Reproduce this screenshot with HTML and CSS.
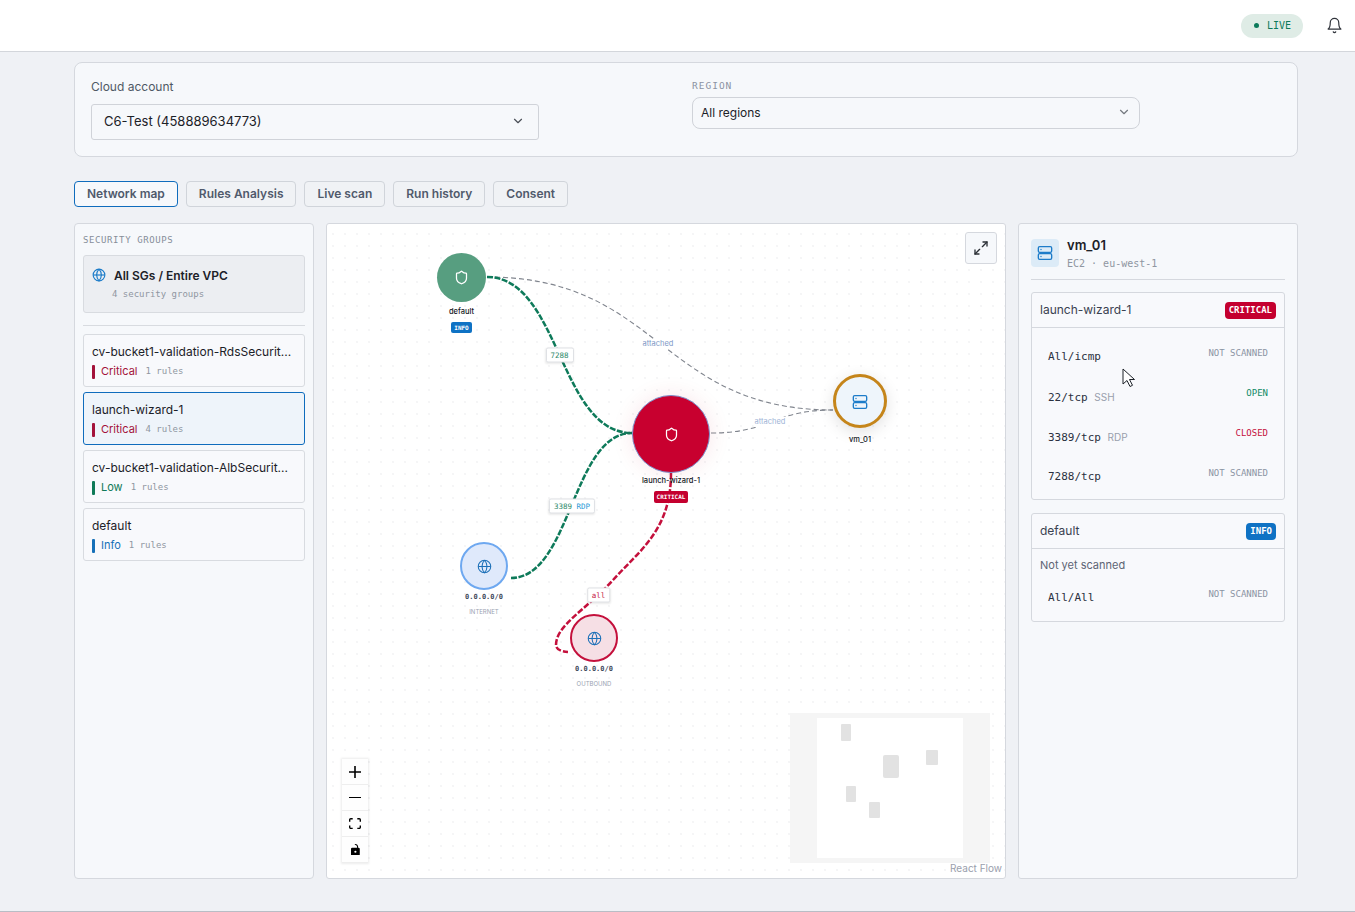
FILE: index.html
```html
<!DOCTYPE html>
<html lang="en">
<head>
    <meta charset="UTF-8">
    <meta name="viewport" content="width=device-width, initial-scale=1.0">
    <title>Network map</title>
    <link rel="stylesheet" href="styles.css">
</head>
<body>
    <header class="topbar">
        <div class="live-pill"><span class="live-dot"></span>LIVE</div>
        <svg class="bell" viewBox="0 0 24 24"><path d="M6 8a6 6 0 0 1 12 0c0 7 3 9 3 9H3s3-2 3-9"/><path d="M10.3 21a1.94 1.94 0 0 0 3.4 0"/></svg>
    </header>

    <main class="page">
        <section class="filters">
            <div class="field">
                <label class="field-label">Cloud account</label>
                <div class="select select-large">
                    <span>C6-Test (458889634773)</span>
                    <svg class="chevron" viewBox="0 0 24 24"><path d="m6 9 6 6 6-6"/></svg>
                </div>
            </div>
            <div class="field">
                <label class="field-label-mono">REGION</label>
                <div class="select select-small">
                    <span>All regions</span>
                    <svg class="chevron chevron-light" viewBox="0 0 24 24"><path d="m6 9 6 6 6-6"/></svg>
                </div>
            </div>
        </section>

        <nav class="tabs">
            <button class="tab tab-active">Network map</button>
            <button class="tab">Rules Analysis</button>
            <button class="tab">Live scan</button>
            <button class="tab">Run history</button>
            <button class="tab">Consent</button>
        </nav>

        <div class="columns">
            <aside class="sg-panel">
                <div class="mono-heading">SECURITY GROUPS</div>
                <div class="all-card">
                    <div class="all-title">
                        <svg class="globe" viewBox="0 0 24 24"><circle cx="12" cy="12" r="10"/><path d="M12 2a14.5 14.5 0 0 0 0 20 14.5 14.5 0 0 0 0-20"/><path d="M2 12h20"/></svg>
                        All SGs / Entire VPC
                    </div>
                    <div class="all-sub">4 security groups</div>
                </div>
                <div class="divider"></div>
                <ul class="sg-list">
                    <li class="sg-item">
                        <div class="sg-name">cv-bucket1-validation-RdsSecurit...</div>
                        <div class="sg-meta sev-critical"><span class="sev-bar"></span>Critical<span class="sg-rules">1 rules</span></div>
                    </li>
                    <li class="sg-item sg-selected">
                        <div class="sg-name">launch-wizard-1</div>
                        <div class="sg-meta sev-critical"><span class="sev-bar"></span>Critical<span class="sg-rules">4 rules</span></div>
                    </li>
                    <li class="sg-item">
                        <div class="sg-name">cv-bucket1-validation-AlbSecurit...</div>
                        <div class="sg-meta sev-low"><span class="sev-bar"></span>Low<span class="sg-rules">1 rules</span></div>
                    </li>
                    <li class="sg-item">
                        <div class="sg-name">default</div>
                        <div class="sg-meta sev-info"><span class="sev-bar"></span>Info<span class="sg-rules">1 rules</span></div>
                    </li>
                </ul>
            </aside>

            <section class="canvas">
                <svg class="edges" viewBox="327 224 678 654">
                    <path class="edge-attached" d="M487 277C660 277 660 410 833 410"/>
                    <path class="edge-attached" d="M711 433C772 433 772 410 833 410"/>
                    <path class="edge-green" d="M487 277C560 277 559 433 632 433"/>
                    <path class="edge-green" d="M511 578C571 578 572 433 632 433"/>
                    <path class="edge-red" d="M671 473C671 530 640 550 613 580S556 625 556 645Q556 651 568 652"/>
                </svg>

                <div class="edge-label edge-label-7288 text-green">7288</div>
                <div class="edge-label edge-label-rdp"><span class="text-green">3389</span> <span class="text-blue">RDP</span></div>
                <div class="edge-label edge-label-all text-red">all</div>
                <div class="edge-text edge-text-one">attached</div>
                <div class="edge-text edge-text-two">attached</div>

                <div class="node node-default">
                    <div class="circle">
                        <svg class="shield" viewBox="0 0 24 24"><path d="M20 13c0 5-3.5 7.5-7.66 8.95a1 1 0 0 1-.67-.01C7.5 20.5 4 18 4 13V6a1 1 0 0 1 1-1c2 0 4.5-1.2 6.24-2.72a1.17 1.17 0 0 1 1.52 0C14.51 3.81 17 5 19 5a1 1 0 0 1 1 1z"/></svg>
                    </div>
                    <div class="node-label">default</div>
                    <div class="node-badge badge-info">INFO</div>
                </div>

                <div class="node node-launch">
                    <div class="circle">
                        <svg class="shield" viewBox="0 0 24 24"><path d="M20 13c0 5-3.5 7.5-7.66 8.95a1 1 0 0 1-.67-.01C7.5 20.5 4 18 4 13V6a1 1 0 0 1 1-1c2 0 4.5-1.2 6.24-2.72a1.17 1.17 0 0 1 1.52 0C14.51 3.81 17 5 19 5a1 1 0 0 1 1 1z"/></svg>
                    </div>
                    <div class="node-label">launch-wizard-1</div>
                    <div class="node-badge badge-critical">CRITICAL</div>
                </div>

                <div class="node node-vm">
                    <div class="circle">
                        <svg class="server" viewBox="0 0 24 24"><rect x="2" y="2.5" width="20" height="8.5" rx="2"/><rect x="2" y="13" width="20" height="8.5" rx="2"/><path d="M6 6.7h.01"/><path d="M6 17.2h.01"/></svg>
                    </div>
                    <div class="node-label">vm_01</div>
                </div>

                <div class="node node-internet">
                    <div class="circle">
                        <svg class="globe-node" viewBox="0 0 24 24"><circle cx="12" cy="12" r="10"/><path d="M12 2a14.5 14.5 0 0 0 0 20 14.5 14.5 0 0 0 0-20"/><path d="M2 12h20"/></svg>
                    </div>
                    <div class="node-ip">0.0.0.0/0</div>
                    <div class="node-type">INTERNET</div>
                </div>

                <div class="node node-outbound">
                    <div class="circle">
                        <svg class="globe-node" viewBox="0 0 24 24"><circle cx="12" cy="12" r="10"/><path d="M12 2a14.5 14.5 0 0 0 0 20 14.5 14.5 0 0 0 0-20"/><path d="M2 12h20"/></svg>
                    </div>
                    <div class="node-ip">0.0.0.0/0</div>
                    <div class="node-type">OUTBOUND</div>
                </div>

                <button class="expand-button">
                    <svg viewBox="0 0 24 24"><path d="M15 3h6v6"/><path d="m21 3-7 7"/><path d="m3 21 7-7"/><path d="M9 21H3v-6"/></svg>
                </button>

                <div class="controls">
                    <button class="control"><svg class="icon-plus" viewBox="0 0 32 32"><path d="M32 18.133H18.133V32h-4.266V18.133H0v-4.266h13.867V0h4.266v13.867H32z"/></svg></button>
                    <button class="control"><svg class="icon-minus" viewBox="0 0 32 5"><path d="M0 0h32v4.2H0z"/></svg></button>
                    <button class="control"><svg class="icon-fit" viewBox="0 0 32 30"><path d="M3.692 4.63c0-.53.4-.938.939-.938h5.215V0H4.708C2.13 0 0 2.054 0 4.63v5.216h3.692V4.631zM27.354 0h-5.2v3.692h5.17c.53 0 .984.4.984.939v5.215H32V4.631A4.624 4.624 0 0027.354 0zm.954 24.83c0 .532-.4.94-.939.94h-5.215v3.768h5.215c2.577 0 4.631-2.13 4.631-4.707v-5.139h-3.692v5.139zm-23.677.94c-.531 0-.939-.4-.939-.94v-5.138H0v5.139c0 2.577 2.13 4.707 4.708 4.707h5.138V25.77H4.631z"/></svg></button>
                    <button class="control"><svg class="icon-lock" viewBox="0 0 25 32"><path d="M21.333 10.667H19.81V7.619C19.81 3.429 16.38 0 12.19 0c-4.114 1.828-1.37 2.133.305 2.438 1.676.305 4.42 2.59 4.42 5.181v3.048H3.047A3.056 3.056 0 000 13.714v15.238A3.056 3.056 0 003.048 32h18.285a3.056 3.056 0 003.048-3.048V13.714a3.056 3.056 0 00-3.048-3.047zM12.19 24.533a3.056 3.056 0 01-3.047-3.047 3.056 3.056 0 013.047-3.048 3.056 3.056 0 013.048 3.048 3.056 3.056 0 01-3.048 3.047z"/></svg></button>
                </div>

                <svg class="minimap" viewBox="790 713 200 150">
                    <rect class="minimap-mask" x="790" y="713" width="200" height="150"/>
                    <rect class="minimap-view" x="817" y="718" width="146" height="140"/>
                    <rect class="minimap-node" x="841" y="724" width="10" height="17" rx="1"/>
                    <rect class="minimap-node" x="883" y="755" width="16" height="23" rx="2"/>
                    <rect class="minimap-node" x="926" y="750" width="12" height="15" rx="1"/>
                    <rect class="minimap-node" x="846" y="786" width="10" height="16" rx="1"/>
                    <rect class="minimap-node" x="869" y="802" width="11" height="16" rx="1"/>
                </svg>

                <div class="attribution">React Flow</div>
            </section>

            <aside class="detail-panel">
                <div class="detail-head">
                    <div class="detail-icon">
                        <svg class="server" viewBox="0 0 24 24"><rect x="2" y="2.5" width="20" height="8.5" rx="2"/><rect x="2" y="13" width="20" height="8.5" rx="2"/><path d="M6 6.7h.01"/><path d="M6 17.2h.01"/></svg>
                    </div>
                    <div>
                        <div class="detail-name">vm_01</div>
                        <div class="detail-sub">EC2 · eu-west-1</div>
                    </div>
                </div>

                <div class="rule-card">
                    <div class="rule-head">
                        <span class="rule-title">launch-wizard-1</span>
                        <span class="badge badge-critical">CRITICAL</span>
                    </div>
                    <div class="rule-rows">
                        <div class="rule-row"><div class="port">All/icmp</div><div class="status status-none">NOT SCANNED</div></div>
                        <div class="rule-row"><div class="port">22/tcp <span class="service">SSH</span></div><div class="status status-open">OPEN</div></div>
                        <div class="rule-row"><div class="port">3389/tcp <span class="service">RDP</span></div><div class="status status-closed">CLOSED</div></div>
                        <div class="rule-row"><div class="port">7288/tcp</div><div class="status status-none">NOT SCANNED</div></div>
                    </div>
                </div>

                <div class="rule-card">
                    <div class="rule-head">
                        <span class="rule-title">default</span>
                        <span class="badge badge-info">INFO</span>
                    </div>
                    <div class="rule-note">Not yet scanned</div>
                    <div class="rule-rows rule-rows-noted">
                        <div class="rule-row"><div class="port">All/All</div><div class="status status-none">NOT SCANNED</div></div>
                    </div>
                </div>
            </aside>
        </div>
    </main>

    <svg class="cursor" viewBox="0 0 14 20"><path d="M1 1v15l4-3.5 3 6 2.5-1.2-3-5.8h5z"/></svg>
</body>
</html>
```

FILE: styles.css
```css
* {
    box-sizing: border-box;
}
body {
    margin: 0;
    height: 912px;
    display: flex;
    flex-direction: column;
    overflow: hidden;
    font-family: Inter, "Liberation Sans", sans-serif;
    background-color: #eff1f5;
    color: #1c2128;
}
button {
    font-family: inherit;
}

/* Top bar */
.topbar {
    height: 52px;
    flex-shrink: 0;
    display: flex;
    justify-content: flex-end;
    align-items: center;
    padding: 0 12px 0 0;
    background-color: #fff;
    border-bottom: 1px solid #d3d6db;
}
.live-pill {
    width: 62px;
    height: 24px;
    display: flex;
    align-items: center;
    gap: 8px;
    padding-left: 13px;
    border-radius: 12px;
    background-color: #dfece6;
    color: #0c7a5a;
    font-family: "DejaVu Sans Mono", monospace;
    font-size: 10px;
}
.live-dot {
    width: 5px;
    height: 5px;
    border-radius: 50%;
    background-color: #0c7a5a;
}
.bell {
    width: 17px;
    height: 17px;
    margin-left: 23px;
    fill: none;
    stroke: #30343b;
    stroke-width: 1.7;
    stroke-linecap: round;
    stroke-linejoin: round;
}

/* Page */
.page {
    flex: 1;
    padding: 10px 57px 0 74px;
    border-bottom: 1px solid #b9bdc5;
}
.filters {
    height: 95px;
    display: flex;
    gap: 153px;
    padding: 16px;
    background-color: #f6f8fb;
    border: 1px solid #d5d8de;
    border-radius: 8px;
}
.field {
    width: 448px;
}
.field-label {
    display: block;
    height: 16px;
    margin-bottom: 9px;
    font-size: 12px;
    line-height: 16px;
    color: #4f5865;
}
.field-label-mono {
    display: block;
    height: 14px;
    margin-bottom: 4px;
    font-family: "DejaVu Sans Mono", monospace;
    font-size: 9.5px;
    line-height: 14px;
    letter-spacing: 1px;
    color: #8b93a3;
}
.select {
    display: flex;
    justify-content: space-between;
    align-items: center;
    background-color: #f6f8fb;
    border: 1px solid #d0d3d9;
}
.select-large {
    height: 36px;
    padding: 0 13px 2px 12px;
    border-radius: 3px;
    font-size: 13px;
}
.select-small {
    height: 32px;
    padding: 0 8px 2px;
    border-radius: 8px;
    font-size: 12px;
}
.chevron {
    width: 14px;
    height: 14px;
    fill: none;
    stroke: #4a4f57;
    stroke-width: 2;
    stroke-linecap: round;
    stroke-linejoin: round;
}
.chevron-light {
    stroke: #74797f;
}

/* Tabs */
.tabs {
    display: flex;
    gap: 8px;
    margin: 24px 0 16px;
}
.tab {
    height: 26px;
    padding: 0 12px 2px;
    background-color: #f0f2f5;
    border: 1px solid #d0d4da;
    border-radius: 4px;
    font-size: 12px;
    font-weight: 600;
    color: #505a6c;
}
.tab-active {
    background-color: #f6f8fb;
    border-color: #0f6cbd;
}

.columns {
    display: grid;
    grid-template-columns: 240px 680px 280px;
    gap: 12px;
    height: 656px;
}

/* Security groups */
.sg-panel {
    padding: 10px 8px;
    background-color: #f6f8fb;
    border: 1px solid #d5d8de;
    border-radius: 4px;
}
.mono-heading {
    height: 12px;
    margin-bottom: 9px;
    font-family: "DejaVu Sans Mono", monospace;
    font-size: 9px;
    line-height: 12px;
    letter-spacing: 0.6px;
    color: #868e99;
}
.all-card {
    height: 58px;
    padding: 11px 8px 0;
    background-color: #eceef2;
    border: 1px solid #d8dbe0;
    border-radius: 3px;
}
.all-title {
    display: flex;
    align-items: center;
    gap: 8px;
    height: 16px;
    font-size: 12px;
    font-weight: 600;
}
.globe {
    width: 14px;
    height: 14px;
    fill: none;
    stroke: #1d7cc9;
    stroke-width: 2;
}
.all-sub {
    margin: 5px 0 0 20px;
    font-family: "DejaVu Sans Mono", monospace;
    font-size: 9px;
    line-height: 12px;
    color: #8f96a1;
}
.divider {
    height: 1px;
    margin: 12px 0 8px;
    background-color: #d8dbe0;
}
.sg-list {
    display: flex;
    flex-direction: column;
    gap: 5px;
    margin: 0;
    padding: 0;
    list-style-type: none;
}
.sg-item {
    height: 53px;
    padding: 9px 8px 7px;
    background-color: #f8f9fc;
    border: 1px solid #d8dbe0;
    border-radius: 3px;
}
.sg-selected {
    background-color: #eef4fa;
    border-color: #0f6cbd;
}
.sg-name {
    white-space: nowrap;
    font-size: 12px;
    line-height: 16px;
}
.sg-meta {
    display: flex;
    align-items: center;
    margin-top: 4px;
    font-size: 11px;
    line-height: 15px;
}
.sev-bar {
    width: 3px;
    height: 14px;
    margin-right: 6px;
    border-radius: 1px;
    background-color: currentColor;
}
.sev-critical {
    color: #a3123a;
}
.sev-low {
    color: #0f7a58;
}
.sev-info {
    color: #1670b8;
}
.sg-rules {
    margin-left: 8px;
    font-family: "DejaVu Sans Mono", monospace;
    font-size: 9px;
    color: #8f96a1;
}

/* Canvas */
.canvas {
    position: relative;
    overflow: hidden;
    background-color: #fff;
    background-image: radial-gradient(circle, #e9eaec 0.6px, transparent 0.8px);
    background-size: 12px 12px;
    background-position: 0 4px;
    border: 1px solid #d5d8de;
    border-radius: 3px;
}
.edges {
    position: absolute;
    left: 0;
    top: 0;
    width: 678px;
    height: 654px;
}
.edges path {
    fill: none;
}
.edge-attached {
    stroke: #80858e;
    stroke-width: 1.1;
    stroke-dasharray: 5 3;
}
.edge-green {
    stroke: #0e7a5a;
    stroke-width: 2.5;
    stroke-dasharray: 6 1.5;
}
.edge-red {
    stroke: #c4103c;
    stroke-width: 2.5;
    stroke-dasharray: 6 2;
}
.edge-label {
    position: absolute;
    padding: 0 4px;
    height: 15px;
    transform: translate(-50%, -50%);
    background-color: #fff;
    border: 1px solid #dfe1e5;
    border-radius: 2px;
    box-shadow: 0 1px 2px rgba(0, 0, 0, 0.08);
    font-family: "DejaVu Sans Mono", monospace;
    font-size: 7.5px;
    line-height: 13px;
    white-space: nowrap;
}
.edge-label-7288 {
    left: 232.5px;
    top: 130.5px;
}
.edge-label-rdp {
    left: 245px;
    top: 281.5px;
}
.edge-label-all {
    left: 271.5px;
    top: 370.5px;
}
.text-green {
    color: #2d8a6a;
}
.text-blue {
    color: #2a9ad6;
}
.text-red {
    color: #c4103c;
}
.edge-text {
    position: absolute;
    padding: 0 1px;
    transform: translate(-50%, -50%);
    background-color: #fff;
    font-size: 7.5px;
    line-height: 10px;
    color: #7c98c6;
}
.edge-text-one {
    left: 331px;
    top: 120px;
}
.edge-text-two {
    left: 443px;
    top: 198px;
    color: #9db3d6;
}

/* Nodes */
.node {
    position: absolute;
    width: 100px;
    display: flex;
    flex-direction: column;
    align-items: center;
}
.circle {
    flex-shrink: 0;
    display: flex;
    justify-content: center;
    align-items: center;
    border-radius: 50%;
}
.shield {
    fill: none;
    stroke: #fff;
    stroke-width: 2;
    stroke-linecap: round;
    stroke-linejoin: round;
}
.server {
    width: 16px;
    height: 16px;
    fill: none;
    stroke: #1d7cc9;
    stroke-width: 2;
    stroke-linecap: round;
}
.globe-node {
    width: 15px;
    height: 15px;
    fill: none;
    stroke: #1d70b8;
    stroke-width: 1.7;
}
.node-label {
    margin-top: 5px;
    font-size: 7.5px;
    line-height: 9px;
    font-weight: 500;
    color: #12161d;
    white-space: nowrap;
}
.node-badge {
    margin-top: 6px;
    padding: 0 3px;
    height: 11px;
    border-radius: 2px;
    color: #fff;
    font-family: "DejaVu Sans Mono", monospace;
    font-size: 6px;
    font-weight: 700;
    line-height: 11px;
}
.node-default {
    left: 84.5px;
    top: 29px;
}
.node-default .circle {
    width: 49px;
    height: 49px;
    background-color: #579e80;
}
.node-default .shield {
    width: 15px;
    height: 15px;
}
.node-launch {
    left: 294px;
    top: 171px;
}
.node-launch .circle {
    width: 78px;
    height: 78px;
    background-color: #c8002f;
    border: 1.5px solid #7d8fc9;
    box-shadow: 0 0 22px rgba(200, 0, 47, 0.1);
}
.node-launch .shield {
    width: 15px;
    height: 15px;
}
.node-launch .node-label {
    margin-top: 3px;
}
.node-launch .node-badge {
    height: 12px;
}
.node-vm {
    left: 483px;
    top: 150px;
}
.node-vm .circle {
    width: 54px;
    height: 54px;
    padding-top: 2px;
    background-color: #eef5fb;
    border: 3px solid #c5851a;
    box-shadow: 0 4px 16px rgba(0, 0, 0, 0.12);
}
.node-vm .node-label {
    margin-top: 7px;
}
.node-internet {
    left: 107px;
    top: 318px;
}
.node-internet .circle {
    width: 48px;
    height: 48px;
    background-color: #dfe9fb;
    border: 2px solid #6ea8f0;
}
.node-outbound {
    left: 217px;
    top: 390px;
}
.node-outbound .circle {
    width: 48px;
    height: 48px;
    background-color: #f6dfe5;
    border: 2px solid #c4103c;
}
.node-ip {
    margin-top: 3px;
    font-family: "DejaVu Sans Mono", monospace;
    font-size: 7px;
    font-weight: 700;
    line-height: 9px;
    color: #3f4a5c;
}
.node-type {
    margin-top: 5px;
    font-size: 6px;
    line-height: 9px;
    color: #9aa3b2;
}

/* Canvas overlays */
.expand-button {
    position: absolute;
    top: 8px;
    right: 8px;
    width: 32px;
    height: 32px;
    display: flex;
    justify-content: center;
    align-items: center;
    padding: 0;
    background-color: #f6f8fb;
    border: 1px solid #d5d8de;
    border-radius: 3px;
}
.expand-button svg {
    width: 16px;
    height: 16px;
    fill: none;
    stroke: #2b2f36;
    stroke-width: 2;
    stroke-linecap: round;
    stroke-linejoin: round;
}
.controls {
    position: absolute;
    left: 15px;
    bottom: 15px;
    width: 26px;
    box-shadow: 0 0 2px 1px rgba(0, 0, 0, 0.08);
}
.control {
    display: flex;
    justify-content: center;
    align-items: center;
    width: 26px;
    height: 26px;
    padding: 0;
    background-color: #fefefe;
    border: none;
    border-bottom: 1px solid #eee;
}
.control svg {
    width: 12px;
    max-height: 12px;
}
.control .icon-lock {
    width: 9px;
}
.minimap {
    position: absolute;
    right: 15px;
    bottom: 15px;
    width: 200px;
    height: 150px;
}
.minimap-mask {
    fill: #f5f5f5;
}
.minimap-view {
    fill: #fff;
}
.minimap-node {
    fill: #e2e2e2;
}
.attribution {
    position: absolute;
    right: 3px;
    bottom: 3px;
    font-size: 10px;
    line-height: 13px;
    color: #9aa0ad;
}

/* Detail panel */
.detail-panel {
    padding: 13px 12px;
    background-color: #f6f8fb;
    border: 1px solid #d5d8de;
    border-radius: 3px;
}
.detail-head {
    display: flex;
    gap: 8px;
    height: 43px;
    margin-bottom: 12px;
    border-bottom: 1px solid #d5d8de;
}
.detail-icon {
    width: 28px;
    height: 28px;
    margin-top: 2px;
    display: flex;
    justify-content: center;
    align-items: center;
    background-color: #dcebf7;
    border-radius: 4px;
}
.detail-name {
    font-size: 13px;
    font-weight: 600;
    line-height: 16px;
}
.detail-sub {
    margin-top: 4px;
    font-family: "DejaVu Sans Mono", monospace;
    font-size: 10px;
    line-height: 14px;
    color: #8f96a1;
}
.rule-card {
    margin-bottom: 13px;
    background-color: #f8f9fc;
    border: 1px solid #d5d8de;
    border-radius: 3px;
}
.rule-head {
    height: 35px;
    display: flex;
    justify-content: space-between;
    align-items: center;
    padding: 0 8px;
    border-bottom: 1px solid #d5d8de;
    font-size: 12px;
    color: #3a4150;
}
.rule-title {
    margin-top: -2px;
}
.badge {
    height: 17px;
    padding: 0 4px;
    border-radius: 4px;
    color: #fff;
    font-family: "DejaVu Sans Mono", monospace;
    font-size: 9px;
    font-weight: 700;
    line-height: 16px;
}
.badge-critical {
    background-color: #c4002f;
}
.badge-info {
    background-color: #0f72c4;
}
.rule-rows {
    display: flex;
    flex-direction: column;
    gap: 22px;
    padding: 19.5px 16px 13.5px;
}
.rule-rows-noted {
    padding-top: 16px;
    padding-bottom: 14px;
}
.rule-row {
    display: flex;
    justify-content: space-between;
    align-items: flex-start;
    height: 18px;
}
.port {
    font-family: "DejaVu Sans Mono", monospace;
    font-size: 11px;
    line-height: 18px;
    color: #2a3040;
}
.service {
    font-family: Inter, "Liberation Sans", sans-serif;
    font-size: 10px;
    color: #98a0ad;
}
.status {
    margin-top: -1px;
    font-family: "DejaVu Sans Mono", monospace;
    font-size: 9px;
    line-height: 12px;
}
.status-none {
    color: #8b94a3;
}
.status-open {
    color: #0f8a66;
}
.status-closed {
    color: #c4103c;
}
.rule-note {
    padding: 8px 8px 0;
    font-size: 11px;
    line-height: 16px;
    color: #5d6474;
}

/* Recorded mouse pointer */
.cursor {
    position: absolute;
    left: 1122px;
    top: 368px;
    width: 14px;
    height: 20px;
    fill: #fff;
    stroke: #1c2128;
    stroke-width: 1;
    stroke-linejoin: round;
}
```
